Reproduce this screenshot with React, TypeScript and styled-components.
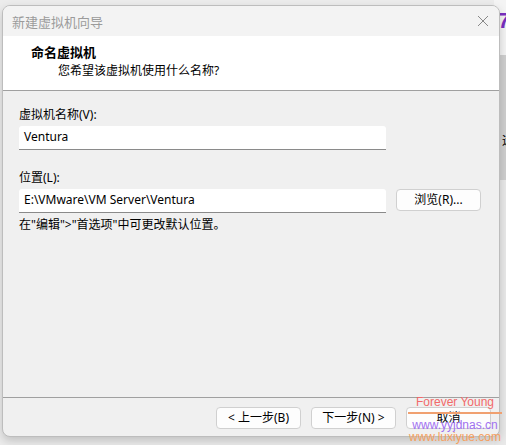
import styled, { createGlobalStyle } from "styled-components";

const GlobalStyle = createGlobalStyle`
  html, body {
    margin: 0;
    padding: 0;
    background: #ececec;
  }
  body {
    font-family: "Noto Sans", "Noto Sans CJK SC", sans-serif;
    font-size: 12px;
    color: #000;
  }
`;

const Page = styled.div`
  position: relative;
  width: 506px;
  height: 445px;
  overflow: hidden;
  display: flex;
  background: #ececec;
`;

const BackWindow = styled.div`
  position: absolute;
  top: 0;
  right: 0;
  width: 12px;
  height: 445px;
  display: flex;
  flex-direction: column;
  background: #e9e9e9;
`;

const BackTop = styled.div`
  height: 55px;
  background: #f4f4f4;
  color: #7a2fc0;
  font: 700 22px "Liberation Sans", sans-serif;
  padding: 8px 0 0 4px;
  box-sizing: border-box;
`;

const BackPanel = styled.div`
  height: 125px;
  background: #cfcfcf;
  border-left: 2px solid #e2e2e2;
  font-size: 12px;
  padding: 76px 0 0 6px;
  box-sizing: border-box;
`;

const Dialog = styled.div`
  position: relative;
  margin: 5px 0 0 2px;
  width: 498px;
  height: 432px;
  box-sizing: border-box;
  border: 1px solid #bdbdbd;
  border-radius: 8px;
  background: #f0f0f0;
  box-shadow: 0 4px 10px rgba(0, 0, 0, 0.18);
  display: flex;
  flex-direction: column;
  overflow: hidden;
`;

const TitleBar = styled.div`
  height: 30px;
  flex: none;
  display: flex;
  align-items: center;
  justify-content: space-between;
  padding: 0 10px 0 9px;
  background: #f3f3f3;
  color: #9b9b9b;
  font-size: 13px;
`;

const Close = styled.svg`
  width: 12px;
  height: 12px;
`;

const Header = styled.div`
  height: 55px;
  flex: none;
  background: #fff;
  border-bottom: 1px solid #a0a0a0;
  padding: 8px 0 0 28px;
  box-sizing: border-box;
`;

const HeaderTitle = styled.div`
  font-weight: 700;
  font-size: 13px;
  line-height: 16px;
`;

const HeaderSub = styled.div`
  margin: 3px 0 0 27px;
  line-height: 16px;
`;

const Body = styled.div`
  flex: 1;
  padding: 16px 0 0 16px;
  display: flex;
  flex-direction: column;
`;

const Label = styled.div<{ $top?: number }>`
  line-height: 16px;
  margin-top: ${(p) => p.$top ?? 0}px;
`;

const Row = styled.div`
  display: flex;
  gap: 10px;
  align-items: flex-start;
`;

const Input = styled.div`
  width: 367px;
  height: 24px;
  margin-top: 3px;
  box-sizing: border-box;
  background: #fff;
  border-radius: 3px 3px 0 0;
  border-bottom: 1px solid #8a8a8a;
  padding: 3px 5px;
  line-height: 16px;
`;

const Button = styled.div<{ $w?: number }>`
  width: ${(p) => p.$w ?? 85}px;
  height: 22px;
  box-sizing: border-box;
  border: 1px solid #d0d0d0;
  border-radius: 4px;
  background: #fdfdfd;
  display: flex;
  align-items: center;
  justify-content: center;
  line-height: 16px;
`;

const BrowseButton = styled(Button)`
  margin-top: 3px;
`;

const Hint = styled.div`
  margin-top: 4px;
  line-height: 16px;
`;

const Footer = styled.div`
  height: 39px;
  flex: none;
  border-top: 1px solid #a0a0a0;
  display: flex;
  justify-content: flex-end;
  gap: 10px;
  padding: 9px 8px 0 0;
  box-sizing: border-box;
`;

const Watermark = styled.div`
  position: absolute;
  left: 408px;
  top: 396px;
  width: 94px;
  display: flex;
  flex-direction: column;
  align-items: center;
  font: 12px "Liberation Sans", sans-serif;
  line-height: 12px;
  pointer-events: none;
`;

const Mark = styled.div<{ $c: string }>`
  color: ${(p) => p.$c};
  white-space: nowrap;
`;

const MarkLine = styled.div`
  width: 94px;
  height: 2px;
  background: #f0a070;
  margin: 4px 0 5px;
`;

export default function App() {
  return (
    <>
      <GlobalStyle />
      <Page>
        <BackWindow>
          <BackTop>7</BackTop>
          <BackPanel>远</BackPanel>
        </BackWindow>
        <Dialog>
          <TitleBar>
            <span>新建虚拟机向导</span>
            <Close viewBox="0 0 12 12">
              <path d="M1 1L11 11M11 1L1 11" stroke="#888" strokeWidth="1" />
            </Close>
          </TitleBar>
          <Header>
            <HeaderTitle>命名虚拟机</HeaderTitle>
            <HeaderSub>您希望该虚拟机使用什么名称?</HeaderSub>
          </Header>
          <Body>
            <Label>虚拟机名称(V):</Label>
            <Input>Ventura</Input>
            <Label $top={20}>位置(L):</Label>
            <Row>
              <Input>E:\VMware\VM Server\Ventura</Input>
              <BrowseButton>浏览(R)...</BrowseButton>
            </Row>
            <Hint>在"编辑"&gt;"首选项"中可更改默认位置。</Hint>
          </Body>
          <Footer>
            <Button>&lt; 上一步(B)</Button>
            <Button>下一步(N) &gt;</Button>
            <Button>取消</Button>
          </Footer>
        </Dialog>
        <Watermark>
          <Mark $c="#f26a6a">Forever Young</Mark>
          <MarkLine />
          <Mark $c="#a070f0">www.yyjdnas.cn</Mark>
          <Mark $c="#f5a060">www.luxiyue.com</Mark>
        </Watermark>
      </Page>
    </>
  );
}
